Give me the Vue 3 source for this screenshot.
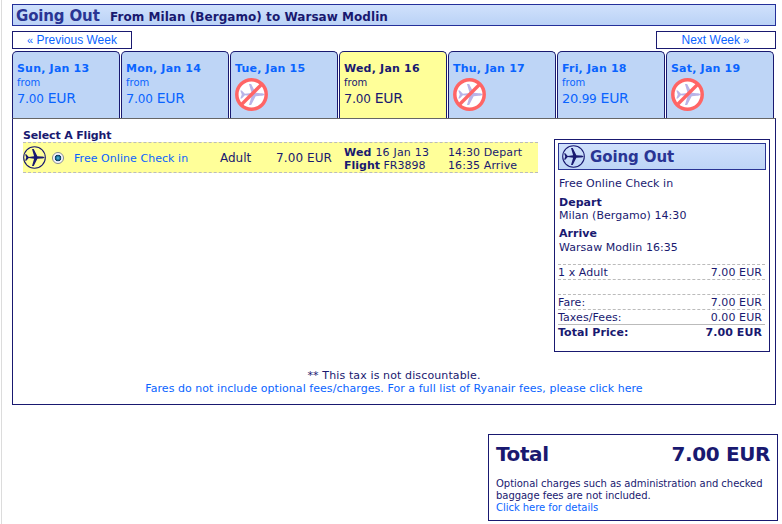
<script setup>
import { ref } from "vue";

const selected = ref(3);

const days = [
  { label: "Sun, Jan 13", whole: "7.", cents: "00" },
  { label: "Mon, Jan 14", whole: "7.", cents: "00" },
  { label: "Tue, Jan 15" },
  { label: "Wed, Jan 16", whole: "7.", cents: "00" },
  { label: "Thu, Jan 17" },
  { label: "Fri, Jan 18", whole: "20.", cents: "99" },
  { label: "Sat, Jan 19" },
];

const plane =
  "M22.6 12 C22 11.3 20.6 11 19 11 L15 10.6 L11.2 3.2 L9.4 3.2 L11.6 10.8 L6 11.4 L3.4 8.6 L2.2 8.6 L3.4 12 L2.2 15.4 L3.4 15.4 L6 12.6 L11.6 13.2 L9.4 20.8 L11.2 20.8 L15 13.4 L19 13 C20.6 13 22 12.7 22.6 12 Z";
</script>

<template>
  <div class="page">
    <div class="content">
      <div class="title">
        <h1>Going Out</h1>
        <h2>From Milan (Bergamo) to Warsaw Modlin</h2>
      </div>

      <div class="weeks">
        <a class="week"><small>«</small> Previous Week</a>
        <a class="week next">Next Week <small>»</small></a>
      </div>

      <div class="tabs">
        <div
          v-for="(day, i) in days"
          :key="day.label"
          class="tab"
          :class="{ active: i === selected }"
          @click="day.whole && (selected = i)"
        >
          <div class="day">{{ day.label }}</div>
          <template v-if="day.whole">
            <div class="from">from</div>
            <div class="price">
              <span class="whole">{{ day.whole }}</span><span class="cents">{{ day.cents }}</span> EUR
            </div>
          </template>
          <svg v-else class="none" viewBox="0 0 33 33">
            <circle cx="16.5" cy="16.5" r="14.5" fill="#fff" />
            <g transform="translate(2.7 2.1) scale(1.2)">
              <path :d="plane" fill="#b9b4e8" />
            </g>
            <path d="M6.5 26.5 L26.5 6.5" stroke="#ff6565" stroke-width="3.4" />
            <circle cx="16.5" cy="16.5" r="14.7" fill="none" stroke="#ff6565" stroke-width="3.5" />
          </svg>
        </div>
      </div>

      <div class="panel">
        <div class="flights">
          <div class="select">Select A Flight</div>
          <div class="flight">
            <svg class="plane" viewBox="0 0 24 24">
              <circle cx="12" cy="12" r="11.3" fill="none" stroke="#191970" stroke-width="1.1" />
              <path :d="plane" fill="#191970" />
            </svg>
            <span class="radio"></span>
            <a class="fare">Free Online Check in</a>
            <span class="adult">Adult</span>
            <span class="amount">7.00 EUR</span>
            <div class="when">
              <div><b>Wed</b> 16 Jan 13</div>
              <div class="number"><b>Flight</b> FR3898</div>
            </div>
            <div class="times">
              <div>14:30 Depart</div>
              <div>16:35 Arrive</div>
            </div>
          </div>
        </div>

        <div class="summary">
          <div class="summary-title">
            <svg class="plane" viewBox="0 0 24 24">
              <circle cx="12" cy="12" r="11.3" fill="none" stroke="#191970" stroke-width="1.1" />
              <path :d="plane" fill="#191970" />
            </svg>
            <h3>Going Out</h3>
          </div>
          <div class="route">
            <p>Free Online Check in</p>
            <p><b>Depart</b><br />Milan (Bergamo) 14:30</p>
            <p class="arrive"><b>Arrive</b><br />Warsaw Modlin 16:35</p>
          </div>
          <div class="lines">
            <div class="line"><span>1 x Adult</span><span>7.00 EUR</span></div>
            <div class="line"></div>
            <div class="line"><span>Fare:</span><span>7.00 EUR</span></div>
            <div class="line"><span>Taxes/Fees:</span><span>0.00 EUR</span></div>
            <div class="line sum"><b>Total Price:</b><b>7.00 EUR</b></div>
          </div>
        </div>

        <div class="notes">
          <div class="tax">** This tax is not discountable.</div>
          <a>Fares do not include optional fees/charges. For a full list of Ryanair fees, please click here</a>
        </div>
      </div>
    </div>

    <div class="total">
      <div class="total-row"><span>Total</span><span>7.00 EUR</span></div>
      <div class="extra">
        Optional charges such as administration and checked<br />
        baggage fees are not included.<br />
        <a>Click here for details</a>
      </div>
    </div>
  </div>
</template>

<style>
body {
  margin: 0;
  background: #fff;
}
</style>

<style scoped>
.page {
  box-sizing: border-box;
  width: 781px;
  height: 524px;
  padding: 4px 4px 0 10px;
  margin-left: 1px;
  border-left: 1px solid #dcdcdc;
  font-family: Verdana, "DejaVu Sans", sans-serif;
  font-size: 11px;
  line-height: 13px;
  color: #191970;
  white-space: nowrap;
  overflow: hidden;
}

.content {
  width: 764px;
}

h1,
h2,
h3,
p {
  margin: 0;
}

a {
  color: #0a64ff;
}

.title {
  box-sizing: border-box;
  display: flex;
  height: 22px;
  padding-left: 3px;
  border: 1px solid #24309a;
  background: linear-gradient(#d0e1fc, #bad2f6);
  line-height: 22px;
}

h1 {
  width: 94px;
  font-size: 15px;
  letter-spacing: -0.15px;
  color: #2a3594;
}

h2 {
  font-size: 12px;
  line-height: 24px;
  letter-spacing: 0.05px;
}

.weeks {
  display: flex;
  justify-content: space-between;
  margin-top: 5px;
}

.week {
  box-sizing: border-box;
  width: 120px;
  height: 18px;
  border: 1px solid #191970;
  font: 12px/17px "Liberation Sans", Arial, sans-serif;
  text-align: center;
}

.week.next {
  padding-right: 1px;
}

.week small {
  font-size: 11px;
}

.tabs {
  display: flex;
  gap: 1px;
  margin-top: 2px;
}

.tab {
  box-sizing: border-box;
  width: 108px;
  height: 67px;
  padding: 9px 0 0 4px;
  border: 1px solid #191970;
  border-bottom: none;
  border-radius: 5px 5px 0 0;
  background: #bed5f6;
  color: #0a64ff;
}

.tab.active {
  background: #ff9;
  color: #191970;
}

.day {
  font-weight: bold;
  line-height: 15px;
  letter-spacing: 0.2px;
}

.from {
  font-size: 10px;
  line-height: 14px;
}

.price {
  font-size: 14px;
  line-height: 16px;
  letter-spacing: -0.3px;
}

.whole {
  font-size: 13px;
}

.cents {
  font-size: 12px;
}

.none {
  display: block;
  width: 33px;
  height: 33px;
  margin-top: 2px;
}

.panel {
  box-sizing: border-box;
  display: flex;
  flex-wrap: wrap;
  align-content: flex-start;
  justify-content: space-between;
  height: 287px;
  padding: 10px 5px 0 10px;
  border: 1px solid #191970;
  border-top-color: #666;
}

.select {
  height: 13px;
  font-weight: bold;
  line-height: 14px;
  letter-spacing: -0.15px;
}

.flight {
  box-sizing: border-box;
  display: flex;
  align-items: center;
  width: 515px;
  height: 31px;
  border: 1px dashed #bbb;
  border-width: 1px 0;
  background: #ff9;
}

.plane {
  flex: none;
  width: 23px;
  height: 23px;
}

.radio {
  box-sizing: border-box;
  width: 12px;
  height: 12px;
  margin: 1px 10px 0 6px;
  border: 1px solid #858b92;
  border-radius: 50%;
  background: radial-gradient(circle, #5fc8ee 0, #176b95 2px, #12384f 3px, #eef 3.6px, #fff 5px);
}

.fare {
  width: 146px;
  padding-top: 2px;
  letter-spacing: 0.05px;
}

.adult {
  width: 56px;
  padding-top: 2px;
  font-size: 12px;
}

.amount {
  width: 68px;
  padding-top: 2px;
  font-size: 12px;
  letter-spacing: 0.1px;
}

.when {
  width: 104px;
  padding-top: 2px;
  letter-spacing: 0.2px;
}

.number {
  letter-spacing: 0;
}

.times {
  padding-top: 2px;
  letter-spacing: 0.1px;
}

.summary {
  box-sizing: border-box;
  width: 216px;
  height: 213px;
  margin-top: 10px;
  padding: 3px;
  border: 1px solid #191970;
}

.summary-title {
  box-sizing: border-box;
  display: flex;
  align-items: center;
  gap: 5px;
  height: 27px;
  padding-left: 3px;
  border: 1px solid #2a3594;
  background: linear-gradient(#d0e1fc, #bed5f6);
}

h3 {
  font-size: 15px;
  line-height: 24px;
  letter-spacing: -0.1px;
  color: #2a3594;
}

.route {
  height: 87px;
  padding: 7px 0 0 1px;
  letter-spacing: 0.05px;
}

.route p {
  margin-bottom: 6px;
}

.route .arrive {
  margin-top: -1px;
  line-height: 14px;
}

.lines {
  height: 80px;
  margin-right: 1px;
}

.line {
  box-sizing: border-box;
  display: flex;
  justify-content: space-between;
  height: 15px;
  padding-right: 3px;
  border-top: 1px dashed #bbb;
  line-height: 15px;
  letter-spacing: 0.08px;
}

.line.sum {
  border-top: 1px solid #bbb;
}

.notes {
  width: 100%;
  margin-top: 17px;
  padding-right: 5px;
  text-align: center;
  letter-spacing: 0.05px;
}

.tax {
  letter-spacing: 0.12px;
}

.total {
  box-sizing: border-box;
  width: 290px;
  height: 87px;
  margin: 29px 0 0 476px;
  padding: 6px 7px 0;
  border: 1px solid #191970;
}

.total-row {
  display: flex;
  justify-content: space-between;
  font-size: 20px;
  font-weight: bold;
  line-height: 26px;
  letter-spacing: -0.4px;
}

.extra {
  margin-top: 11px;
  font-size: 10px;
  line-height: 12px;
  letter-spacing: -0.04px;
}
</style>
